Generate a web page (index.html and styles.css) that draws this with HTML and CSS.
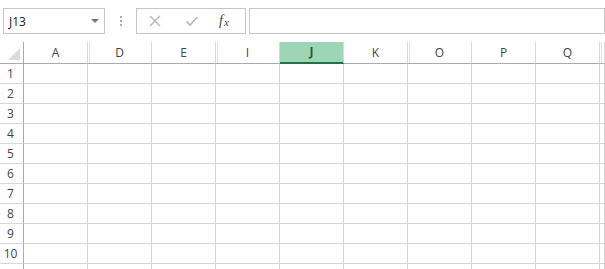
FILE: index.html
```html
<!DOCTYPE html>
<html>
<head>
<meta charset="utf-8">
<link rel="stylesheet" href="styles.css">
</head>
<body>
<div class="toolbar">
  <div class="namebox">
    <span class="ref">J13</span>
    <span class="arrow"></span>
  </div>
  <div class="dots"><i></i><i></i><i></i></div>
  <div class="fxbox">
    <svg class="ico" width="14" height="14" viewBox="0 0 14 14"><path d="M2 2 L12 12 M12 2 L2 12" stroke="#b4b4b4" stroke-width="1.3" fill="none"/></svg>
    <svg class="ico" width="14" height="14" viewBox="0 0 14 14"><path d="M1.5 7.5 L5 11 L12.5 3" stroke="#b4b4b4" stroke-width="1.6" fill="none"/></svg>
    <span class="fx">f<span class="fxx">x</span></span>
  </div>
  <div class="formula"></div>
</div>
<div class="sheet">
  <div class="row head">
    <div class="corner"><span class="tri"></span></div>
    <div class="ch hid">A</div><div class="ch">D</div><div class="ch hid">E</div><div class="ch">I</div><div class="ch sel">J</div><div class="ch hid">K</div><div class="ch">O</div><div class="ch">P</div><div class="ch hid">Q</div><div class="ch"></div>
  </div>
  <div class="row"><div class="rh">1</div><div class="c"></div><div class="c"></div><div class="c"></div><div class="c"></div><div class="c"></div><div class="c"></div><div class="c"></div><div class="c"></div><div class="c"></div><div class="c"></div></div>
  <div class="row"><div class="rh">2</div><div class="c"></div><div class="c"></div><div class="c"></div><div class="c"></div><div class="c"></div><div class="c"></div><div class="c"></div><div class="c"></div><div class="c"></div><div class="c"></div></div>
  <div class="row"><div class="rh">3</div><div class="c"></div><div class="c"></div><div class="c"></div><div class="c"></div><div class="c"></div><div class="c"></div><div class="c"></div><div class="c"></div><div class="c"></div><div class="c"></div></div>
  <div class="row"><div class="rh">4</div><div class="c"></div><div class="c"></div><div class="c"></div><div class="c"></div><div class="c"></div><div class="c"></div><div class="c"></div><div class="c"></div><div class="c"></div><div class="c"></div></div>
  <div class="row"><div class="rh">5</div><div class="c"></div><div class="c"></div><div class="c"></div><div class="c"></div><div class="c"></div><div class="c"></div><div class="c"></div><div class="c"></div><div class="c"></div><div class="c"></div></div>
  <div class="row"><div class="rh">6</div><div class="c"></div><div class="c"></div><div class="c"></div><div class="c"></div><div class="c"></div><div class="c"></div><div class="c"></div><div class="c"></div><div class="c"></div><div class="c"></div></div>
  <div class="row"><div class="rh">7</div><div class="c"></div><div class="c"></div><div class="c"></div><div class="c"></div><div class="c"></div><div class="c"></div><div class="c"></div><div class="c"></div><div class="c"></div><div class="c"></div></div>
  <div class="row"><div class="rh">8</div><div class="c"></div><div class="c"></div><div class="c"></div><div class="c"></div><div class="c"></div><div class="c"></div><div class="c"></div><div class="c"></div><div class="c"></div><div class="c"></div></div>
  <div class="row"><div class="rh">9</div><div class="c"></div><div class="c"></div><div class="c"></div><div class="c"></div><div class="c"></div><div class="c"></div><div class="c"></div><div class="c"></div><div class="c"></div><div class="c"></div></div>
  <div class="row"><div class="rh">10</div><div class="c"></div><div class="c"></div><div class="c"></div><div class="c"></div><div class="c"></div><div class="c"></div><div class="c"></div><div class="c"></div><div class="c"></div><div class="c"></div></div>
  <div class="row"><div class="rh"></div><div class="c"></div><div class="c"></div><div class="c"></div><div class="c"></div><div class="c"></div><div class="c"></div><div class="c"></div><div class="c"></div><div class="c"></div><div class="c"></div></div>
</div>
</body>
</html>
```

FILE: styles.css
```css
html, body {
  margin: 0;
  padding: 0;
  background: #fff;
  overflow: hidden;
}
body {
  width: 605px;
  height: 269px;
  font-family: "Open Sans", "Liberation Sans", sans-serif;
  color: #444;
}
.toolbar {
  height: 42px;
  box-sizing: border-box;
  padding: 8px 0 0 3px;
  display: flex;
  align-items: flex-start;
}
.namebox {
  width: 102px;
  height: 26px;
  box-sizing: border-box;
  border: 1px solid #c6c6c6;
  display: flex;
  align-items: center;
  justify-content: space-between;
  padding: 0 5px 0 5px;
}
.ref {
  font-size: 12px;
  color: #222;
  margin-top: 1px;
}
.arrow {
  width: 0;
  height: 0;
  border-left: 4px solid transparent;
  border-right: 4px solid transparent;
  border-top: 4px solid #777;
  margin-bottom: 1px;
}
.dots {
  width: 31px;
  height: 26px;
  display: flex;
  flex-direction: column;
  align-items: center;
  justify-content: center;
  gap: 2px;
}
.dots i {
  display: block;
  width: 2px;
  height: 2px;
  background: #aaa;
}
.fxbox {
  width: 110px;
  height: 26px;
  box-sizing: border-box;
  border: 1px solid #c6c6c6;
  display: flex;
  align-items: center;
  padding-left: 11px;
}
.fxbox .ico {
  margin-right: 23px;
}
.fxbox .ico + .ico {
  margin-right: 20px;
}
.fx {
  font-family: "Liberation Serif", serif;
  font-style: italic;
  font-size: 14px;
  color: #444;
  line-height: 14px;
  margin-top: -1px;
}
.fxx {
  font-size: 11px;
  position: relative;
  top: 1px;
  margin-left: 1px;
}
.formula {
  margin-left: 3px;
  width: 356px;
  height: 26px;
  box-sizing: border-box;
  border: 1px solid #c6c6c6;
}
.sheet {
  display: flex;
  flex-direction: column;
  height: 227px;
  overflow: hidden;
}
.row {
  display: grid;
  grid-template-columns: 24px repeat(9, 64px) 1fr;
  height: 20px;
  flex: none;
}
.row.head {
  height: 22px;
}
.corner {
  border-right: 1px solid #ababab;
  border-bottom: 1px solid #ababab;
  position: relative;
}
.tri {
  position: absolute;
  right: 3px;
  bottom: 3px;
  width: 0;
  height: 0;
  border-left: 12px solid transparent;
  border-bottom: 12px solid #dcdcdc;
}
.ch {
  border-right: 1px solid #d8d8d8;
  border-bottom: 1px solid #ababab;
  font-size: 12px;
  text-align: center;
  line-height: 21px;
  color: #444;
  position: relative;
}
.ch.hid::after {
  content: "";
  position: absolute;
  right: -3px;
  top: 0;
  bottom: 0;
  width: 1px;
  background: #e2e2e2;
}
.ch.sel {
  background: #9fd5b7;
  border-bottom: 2px solid #217346;
  line-height: 20px;
  color: #1e5e3a;
  font-weight: 700;
}
.rh {
  border-right: 1px solid #ababab;
  border-bottom: 1px solid #d8d8d8;
  font-size: 12px;
  text-align: center;
  line-height: 19px;
  padding-right: 2px;
  color: #444;
}
.c {
  border-right: 1px solid #d4d4d4;
  border-bottom: 1px solid #d4d4d4;
}
```
